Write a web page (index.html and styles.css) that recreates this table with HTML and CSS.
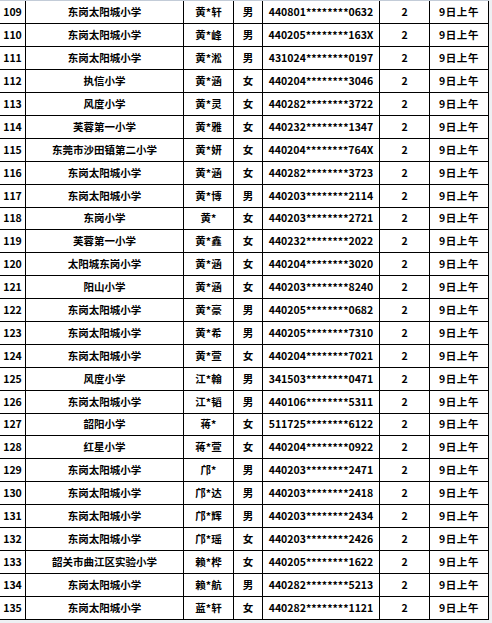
FILE: index.html
```html
<!DOCTYPE html>
<html lang="zh-CN">
<head>
<meta charset="utf-8">
<title>名单</title>
<link rel="stylesheet" href="styles.css">
</head>
<body>
<div class="sheet">
<table class="roster">
<colgroup>
<col class="c-no"><col class="c-school"><col class="c-name"><col class="c-sex"><col class="c-id"><col class="c-num"><col class="c-time">
</colgroup>
<tbody>
<tr><td>109</td><td>东岗太阳城小学</td><td>黄*轩</td><td>男</td><td class="id">440801********0632</td><td>2</td><td class="time">9日上午</td></tr>
<tr><td>110</td><td>东岗太阳城小学</td><td>黄*峰</td><td>男</td><td class="id">440205********163X</td><td>2</td><td class="time">9日上午</td></tr>
<tr><td>111</td><td>东岗太阳城小学</td><td>黄*淞</td><td>男</td><td class="id">431024********0197</td><td>2</td><td class="time">9日上午</td></tr>
<tr><td>112</td><td>执信小学</td><td>黄*涵</td><td>女</td><td class="id">440204********3046</td><td>2</td><td class="time">9日上午</td></tr>
<tr><td>113</td><td>风度小学</td><td>黄*灵</td><td>女</td><td class="id">440282********3722</td><td>2</td><td class="time">9日上午</td></tr>
<tr><td>114</td><td>芙蓉第一小学</td><td>黄*雅</td><td>女</td><td class="id">440232********1347</td><td>2</td><td class="time">9日上午</td></tr>
<tr><td>115</td><td>东莞市沙田镇第二小学</td><td>黄*妍</td><td>女</td><td class="id">440204********764X</td><td>2</td><td class="time">9日上午</td></tr>
<tr><td>116</td><td>东岗太阳城小学</td><td>黄*涵</td><td>女</td><td class="id">440282********3723</td><td>2</td><td class="time">9日上午</td></tr>
<tr><td>117</td><td>东岗太阳城小学</td><td>黄*博</td><td>男</td><td class="id">440203********2114</td><td>2</td><td class="time">9日上午</td></tr>
<tr><td>118</td><td>东岗小学</td><td>黄*</td><td>女</td><td class="id">440203********2721</td><td>2</td><td class="time">9日上午</td></tr>
<tr><td>119</td><td>芙蓉第一小学</td><td>黄*鑫</td><td>女</td><td class="id">440232********2022</td><td>2</td><td class="time">9日上午</td></tr>
<tr><td>120</td><td>太阳城东岗小学</td><td>黄*涵</td><td>女</td><td class="id">440204********3020</td><td>2</td><td class="time">9日上午</td></tr>
<tr><td>121</td><td>阳山小学</td><td>黄*涵</td><td>女</td><td class="id">440203********8240</td><td>2</td><td class="time">9日上午</td></tr>
<tr><td>122</td><td>东岗太阳城小学</td><td>黄*豪</td><td>男</td><td class="id">440205********0682</td><td>2</td><td class="time">9日上午</td></tr>
<tr><td>123</td><td>东岗太阳城小学</td><td>黄*希</td><td>男</td><td class="id">440205********7310</td><td>2</td><td class="time">9日上午</td></tr>
<tr><td>124</td><td>东岗太阳城小学</td><td>黄*萱</td><td>女</td><td class="id">440204********7021</td><td>2</td><td class="time">9日上午</td></tr>
<tr><td>125</td><td>风度小学</td><td>江*翰</td><td>男</td><td class="id">341503********0471</td><td>2</td><td class="time">9日上午</td></tr>
<tr><td>126</td><td>东岗太阳城小学</td><td>江*韬</td><td>男</td><td class="id">440106********5311</td><td>2</td><td class="time">9日上午</td></tr>
<tr><td>127</td><td>韶阳小学</td><td>蒋*</td><td>女</td><td class="id">511725********6122</td><td>2</td><td class="time">9日上午</td></tr>
<tr><td>128</td><td>红星小学</td><td>蒋*萱</td><td>女</td><td class="id">440204********0922</td><td>2</td><td class="time">9日上午</td></tr>
<tr><td>129</td><td>东岗太阳城小学</td><td>邝*</td><td>男</td><td class="id">440203********2471</td><td>2</td><td class="time">9日上午</td></tr>
<tr><td>130</td><td>东岗太阳城小学</td><td>邝*达</td><td>男</td><td class="id">440203********2418</td><td>2</td><td class="time">9日上午</td></tr>
<tr><td>131</td><td>东岗太阳城小学</td><td>邝*辉</td><td>男</td><td class="id">440203********2434</td><td>2</td><td class="time">9日上午</td></tr>
<tr><td>132</td><td>东岗太阳城小学</td><td>邝*瑶</td><td>女</td><td class="id">440203********2426</td><td>2</td><td class="time">9日上午</td></tr>
<tr><td>133</td><td>韶关市曲江区实验小学</td><td>赖*桦</td><td>女</td><td class="id">440205********1622</td><td>2</td><td class="time">9日上午</td></tr>
<tr><td>134</td><td>东岗太阳城小学</td><td>赖*航</td><td>男</td><td class="id">440282********5213</td><td>2</td><td class="time">9日上午</td></tr>
<tr><td>135</td><td>东岗太阳城小学</td><td>蓝*轩</td><td>女</td><td class="id">440282********1121</td><td>2</td><td class="time">9日上午</td></tr>
</tbody>
</table>
</div>
</body>
</html>
```

FILE: styles.css
```css
html, body {
  margin: 0;
  padding: 0;
}
body {
  background: #eef0f3;
  width: 492px;
  height: 623px;
  overflow: hidden;
}
.sheet {
  border-top: 1px solid #c3ccd8;
  margin-left: -1px;
  width: 490px;
}
.roster {
  border-collapse: collapse;
  table-layout: fixed;
  width: 489px;
  background: #fff;
  font-family: "Noto Sans CJK SC", "Noto Sans", sans-serif;
  font-weight: 700;
  font-size: 10.5px;
  color: #000;
}
.c-no { width: 26px; }
.c-school { width: 158px; }
.c-name { width: 50px; }
.c-sex { width: 29px; }
.c-id { width: 117px; }
.c-num { width: 50px; }
.c-time { width: 59px; }
.roster tr {
  height: 22.9px;
}
.roster td {
  border: 1px solid #000;
  padding: 0;
  text-align: center;
  vertical-align: middle;
  line-height: 14px;
  white-space: nowrap;
  overflow: hidden;
}
.roster tr:first-child td {
  border-top: none;
}
.roster td.time {
  letter-spacing: 0.6px;
}
```
